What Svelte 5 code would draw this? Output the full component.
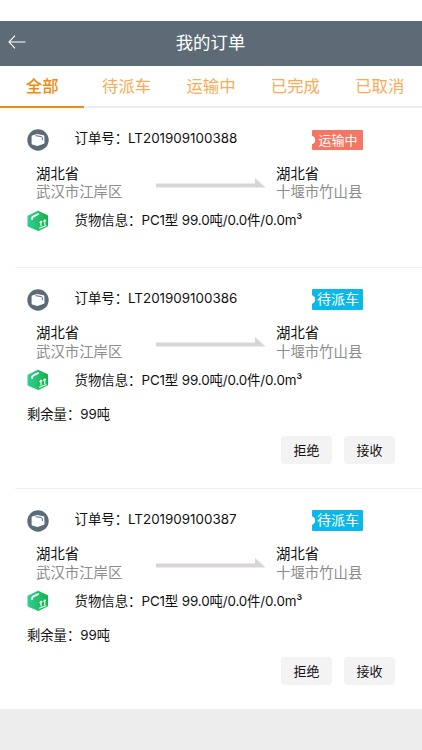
<script lang="ts">
    const tabs = ['全部', '待派车', '运输中', '已完成', '已取消'];
    let active = $state(0);

    const orders = [
        { no: 'LT201909100388', status: '运输中', moving: true, left: '' },
        { no: 'LT201909100386', status: '待派车', moving: false, left: '99' },
        { no: 'LT201909100387', status: '待派车', moving: false, left: '99' },
    ];
</script>

<div class="page">
    <header>
        <svg class="back" viewBox="0 0 18 14" width="18" height="14">
            <path d="M7 .7 1 7l6 6.3M1 7h16.5" />
        </svg>
        <h1>我的订单</h1>
    </header>

    <nav>
        {#each tabs as tab, i}
            <button class="tab" class:active={active === i} onclick={() => (active = i)}>{tab}</button>
        {/each}
    </nav>

    <main>
        {#each orders as order}
            <section class="order" class:pending={order.left}>
                <div class="row head">
                    <svg class="icon" viewBox="0 0 22 22" width="22" height="22">
                        <circle cx="11" cy="11" r="10.7" fill="#5c6b76" />
                        <path d="M4.6 7.4Q4.6 6.800 5.200 6.600L10 5.100l6.500 1.100q.8.200.8 1l.2 6.600q0 .7-.6.900l-5.700 2.100q-.5.200-1 .1l-5-1.300q-.6-.2-.6-.8z" fill="#fff" />
                        <path d="M8.5 6.7l5.7.8q1 .2 1.100 1.100l.1 2.600" fill="none" stroke="#5c6b76" stroke-width="1" />
                    </svg>
                    <div class="text">订单号：<span class="no">{order.no}</span></div>
                    <div class="badge" class:moving={order.moving}><span>{order.status}</span></div>
                </div>

                <div class="route">
                    <div class="place">
                        <div class="province">湖北省</div>
                        <div class="city">武汉市江岸区</div>
                    </div>
                    <svg class="arrow" viewBox="0 0 110 10" width="110" height="10">
                        <path d="M0 5.6h99V0l10.5 9.6H0z" fill="#d9d5d6" />
                    </svg>
                    <div class="place">
                        <div class="province">湖北省</div>
                        <div class="city">十堰市竹山县</div>
                    </div>
                </div>

                <div class="row cargo">
                    <svg class="icon" viewBox="0 0 22 22" width="22" height="22">
                        <defs>
                            <linearGradient id="box" x1="0" x2="1" y1="0" y2="0">
                                <stop offset="0" stop-color="#2fd091" />
                                <stop offset="1" stop-color="#17b04c" />
                            </linearGradient>
                        </defs>
                        <path d="M1.2 5.6 10.5 1q.6-.3 1.200 0L20.400 5q.7.4.7 1v9.500q0 .7-.6 1L12 20.800q-.7.4-1.400 0L1.200 16.800Q.5 16.500.5 15.800V6.600q0-.7.7-1z" fill="url(#box)" />
                        <path d="M5.1 9.8V7.7q0-.5.5-.8L11.800 3.700" fill="none" stroke="#fff" stroke-width="1.8" />
                        <path d="M12.2 18.2l7.2-2.700M14 16.300v-4.800M17.800 15v-4.800M12.600 12.900l1.400-1.600 1.300.7M16.400 11.600l1.400-1.600 1.300.7" fill="none" stroke="#fff" stroke-width="1.1" />
                    </svg>
                    <div class="text">货物信息：<span class="info">PC1型 99.0吨/0.0件/0.0m³</span></div>
                </div>

                {#if order.left}
                    <div class="left">剩余量：<span>{order.left}</span>吨</div>
                    <div class="actions">
                        <button>拒绝</button>
                        <button>接收</button>
                    </div>
                {/if}
            </section>
        {/each}
    </main>
</div>

<style>
    :global(body) {
        margin: 0;
        background: #ededed;
    }

    .page {
        box-sizing: border-box;
        height: 750px;
        padding-top: 20.5px;
        overflow: hidden;
        background: linear-gradient(#fff 709.5px, #ededed 709.5px);
        font-family: Inter, 'Noto Sans CJK SC', sans-serif;
        color: #111;
    }

    button {
        margin: 0;
        padding: 0;
        border: 0;
        font-family: inherit;
    }

    header {
        display: grid;
        grid-template-columns: 33px 1fr 34px;
        align-items: center;
        height: 45px;
        background: #5c6b76;
        color: #fff;
    }

    .back {
        margin: -2px 0 0 8px;
        fill: none;
        stroke: #fff;
        stroke-width: 1.1;
    }

    h1 {
        margin: -1px 0 0;
        text-align: center;
        font-size: 17.4px;
        font-weight: 400;
        line-height: 44px;
    }

    nav {
        display: grid;
        grid-template-columns: repeat(5, 1fr);
        height: 42px;
    }

    .tab {
        padding-top: 1px;
        border-bottom: 2px solid #ededed;
        background: none;
        color: #f9ab55;
        font-size: 16.4px;
        line-height: 39px;
    }

    .tab.active {
        border-bottom-color: #f08a10;
        color: #f08a10;
        font-weight: 500;
    }

    .order {
        box-sizing: border-box;
        height: 159.5px;
        padding: 14px 0 0 27px;
    }

    .order.pending {
        height: 221.3px;
        background: linear-gradient(#f1f1f1, #f1f1f1) 15px 0 / 100% 1px no-repeat;
    }

    .row {
        display: flex;
        align-items: center;
        font-size: 13.4px;
    }

    .head {
        height: 34px;
    }

    .head .icon {
        margin-top: 3px;
    }

    .icon {
        flex: none;
    }

    .text {
        margin: -3px 0 0 25.5px;
        white-space: nowrap;
    }

    .head .text {
        width: 237.5px;
    }

    .info {
        letter-spacing: -0.13px;
    }

    .badge {
        box-sizing: border-box;
        width: 51px;
        height: 20.5px;
        margin-top: 2.5px;
        padding-left: 1px;
        border-radius: 1px;
        background: radial-gradient(circle at -1px 50%, #fff 4px, #0cb8ea 4.6px);
        color: #fff;
        font-size: 14px;
        line-height: 20px;
        text-align: center;
        white-space: nowrap;
    }

    .badge.moving {
        background: radial-gradient(circle at -1px 50%, #fff 4px, #f57665 4.6px);
        font-size: 13px;
    }

    .route {
        display: grid;
        grid-template-columns: 120px 120px auto;
        margin: 9px 0 0 9px;
        font-size: 14.4px;
        line-height: 18.5px;
        white-space: nowrap;
    }

    .arrow {
        margin-top: 13px;
    }

    .city {
        color: #8c8c8c;
    }

    .cargo {
        height: 22px;
        margin-top: 8px;
    }

    .left {
        margin-top: 11.5px;
        font-size: 13.3px;
        line-height: 22px;
    }

    .actions {
        display: flex;
        justify-content: flex-end;
        gap: 12px;
        margin: 11.5px 27px 0 0;
    }

    .actions button {
        width: 51px;
        height: 28px;
        padding-bottom: 1px;
        border-radius: 4px;
        background: #f3f3f3;
        color: #111;
        font-size: 13px;
    }
</style>
